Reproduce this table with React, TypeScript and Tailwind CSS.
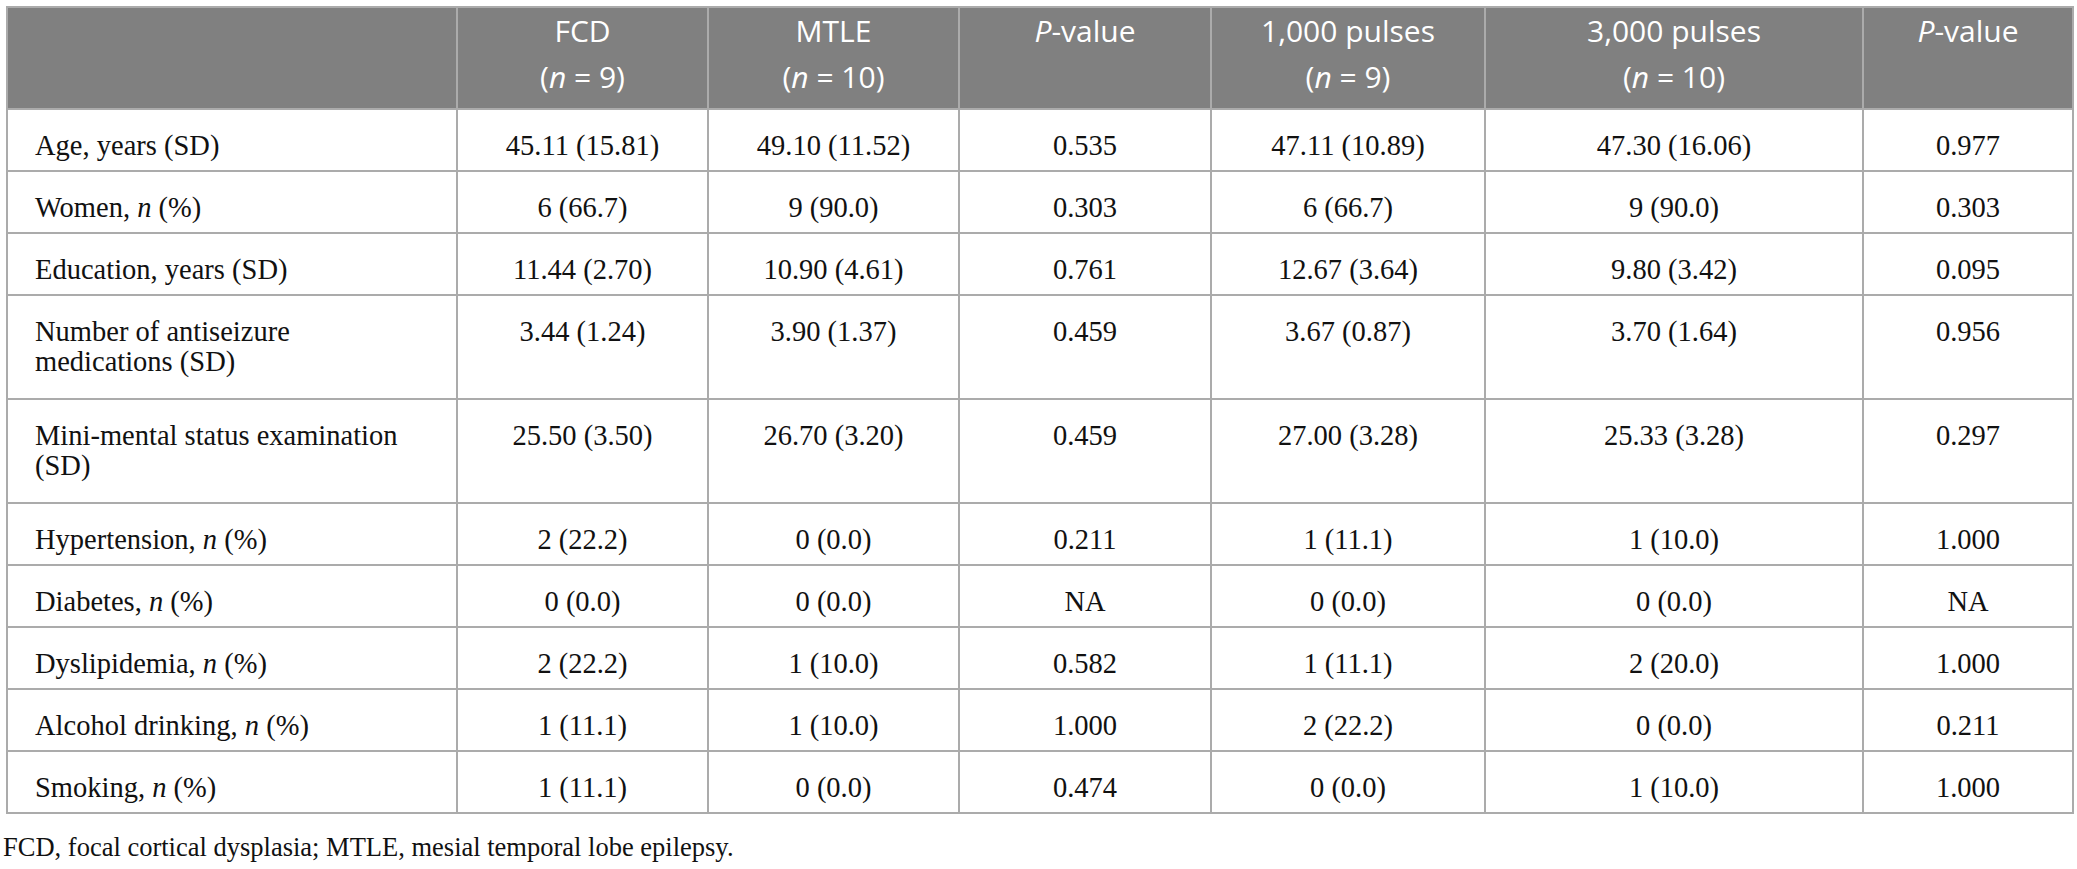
import React from "react";

type Row = { label: React.ReactNode; cells: string[]; tall?: boolean };

const N = () => <i>n</i>;

const rows: Row[] = [
  { label: "Age, years (SD)", cells: ["45.11 (15.81)", "49.10 (11.52)", "0.535", "47.11 (10.89)", "47.30 (16.06)", "0.977"] },
  { label: <>Women, <N /> (%)</>, cells: ["6 (66.7)", "9 (90.0)", "0.303", "6 (66.7)", "9 (90.0)", "0.303"] },
  { label: "Education, years (SD)", cells: ["11.44 (2.70)", "10.90 (4.61)", "0.761", "12.67 (3.64)", "9.80 (3.42)", "0.095"] },
  {
    label: <>Number of antiseizure<br />medications (SD)</>,
    cells: ["3.44 (1.24)", "3.90 (1.37)", "0.459", "3.67 (0.87)", "3.70 (1.64)", "0.956"],
    tall: true,
  },
  {
    label: <>Mini-mental status examination<br />(SD)</>,
    cells: ["25.50 (3.50)", "26.70 (3.20)", "0.459", "27.00 (3.28)", "25.33 (3.28)", "0.297"],
    tall: true,
  },
  { label: <>Hypertension, <N /> (%)</>, cells: ["2 (22.2)", "0 (0.0)", "0.211", "1 (11.1)", "1 (10.0)", "1.000"] },
  { label: <>Diabetes, <N /> (%)</>, cells: ["0 (0.0)", "0 (0.0)", "NA", "0 (0.0)", "0 (0.0)", "NA"] },
  { label: <>Dyslipidemia, <N /> (%)</>, cells: ["2 (22.2)", "1 (10.0)", "0.582", "1 (11.1)", "2 (20.0)", "1.000"] },
  { label: <>Alcohol drinking, <N /> (%)</>, cells: ["1 (11.1)", "1 (10.0)", "1.000", "2 (22.2)", "0 (0.0)", "0.211"] },
  { label: <>Smoking, <N /> (%)</>, cells: ["1 (11.1)", "0 (0.0)", "0.474", "0 (0.0)", "1 (10.0)", "1.000"] },
];

const widths = ["w-[450px]", "w-[251px]", "w-[251px]", "w-[252px]", "w-[274px]", "w-[378px]", "w-[210px]"];

const headers: React.ReactNode[] = [
  "",
  <>FCD<br />(<i>n</i> = 9)</>,
  <>MTLE<br />(<i>n</i> = 10)</>,
  <><i>P</i>-value</>,
  <>1,000 pulses<br />(<i>n</i> = 9)</>,
  <>3,000 pulses<br />(<i>n</i> = 10)</>,
  <><i>P</i>-value</>,
];

export default function App() {
  return (
    <div className="w-[2077px] h-[869px] bg-white pt-[6px] pl-[6px]">
      <table className="table-fixed border-collapse border-2 border-[#ababab] w-[2066px] font-['Liberation_Serif',serif] text-[28.5px] text-[#111]">
        <thead>
          <tr className="bg-[#808080] h-[102px]">
            {headers.map((h, i) => (
              <th
                key={i}
                className={`${widths[i]} border-2 border-[#ababab] align-top pt-0 px-2 font-['Open_Sans',sans-serif] font-normal text-[30px] leading-[46px] text-white text-center`}
              >
                {h}
              </th>
            ))}
          </tr>
        </thead>
        <tbody>
          {rows.map((r, ri) => (
            <tr key={ri} className={r.tall ? "h-[104px]" : "h-[62px]"}>
              <td className="border-2 border-[#ababab] align-top pt-[21px] pl-[27px] leading-[30px]">{r.label}</td>
              {r.cells.map((c, ci) => (
                <td key={ci} className="border-2 border-[#ababab] align-top pt-[21px] text-center leading-[30px]">
                  {c}
                </td>
              ))}
            </tr>
          ))}
        </tbody>
      </table>
      <p className="mt-[14px] -ml-[3px] font-['Liberation_Serif',serif] text-[26.5px] text-[#111]">
        FCD, focal cortical dysplasia; MTLE, mesial temporal lobe epilepsy.
      </p>
    </div>
  );
}
